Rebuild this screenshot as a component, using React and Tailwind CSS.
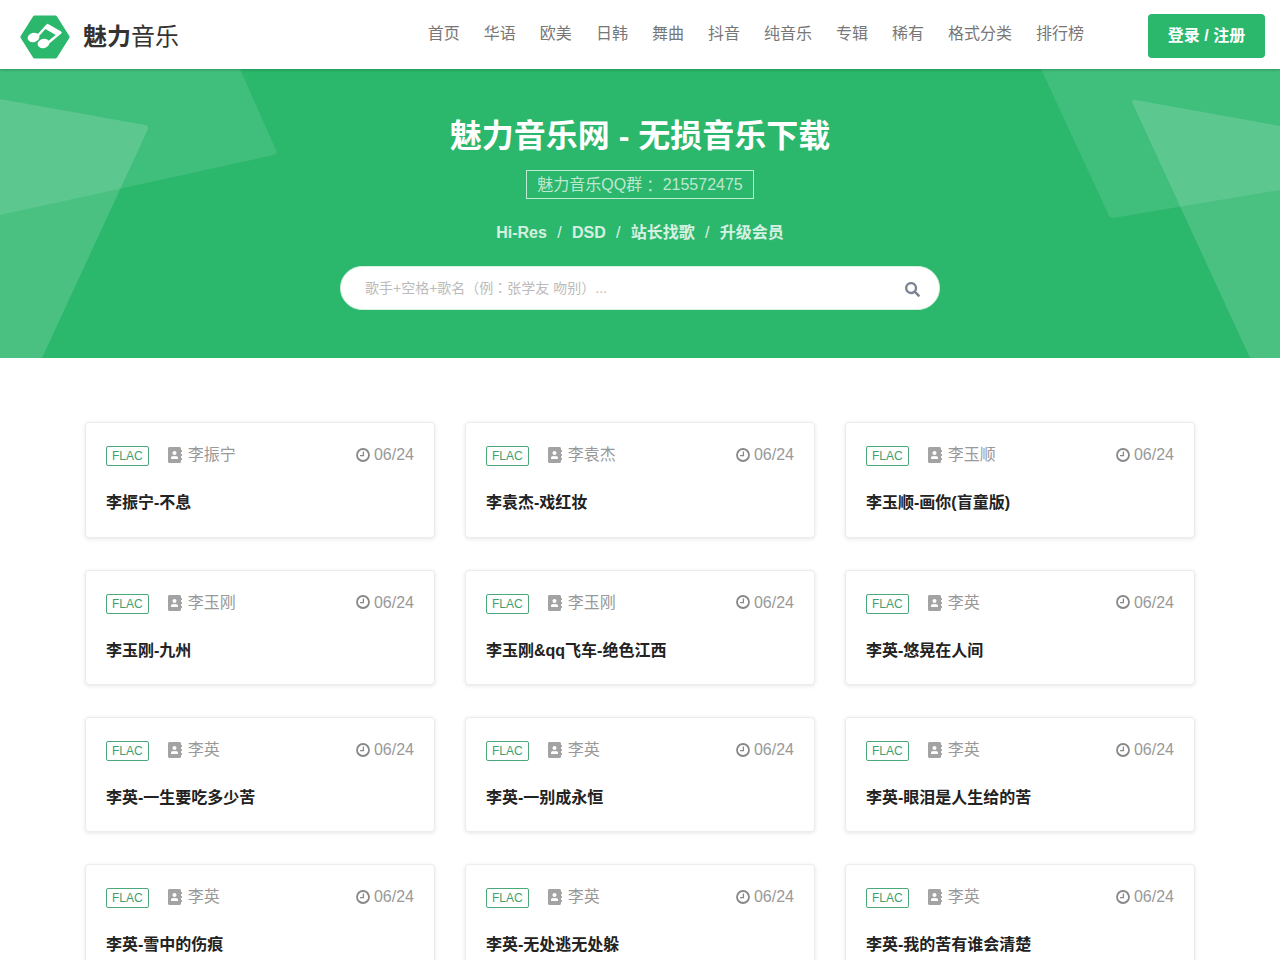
import React from 'react';
import { FaAddressBook, FaSearch } from 'react-icons/fa';

const navItems = ['首页', '华语', '欧美', '日韩', '舞曲', '抖音', '纯音乐', '专辑', '稀有', '格式分类', '排行榜'];

const songs = [
    { artist: '李振宁', title: '李振宁-不息' },
    { artist: '李袁杰', title: '李袁杰-戏红妆' },
    { artist: '李玉顺', title: '李玉顺-画你(盲童版)' },
    { artist: '李玉刚', title: '李玉刚-九州' },
    { artist: '李玉刚', title: '李玉刚&qq飞车-绝色江西' },
    { artist: '李英', title: '李英-悠晃在人间' },
    { artist: '李英', title: '李英-一生要吃多少苦' },
    { artist: '李英', title: '李英-一别成永恒' },
    { artist: '李英', title: '李英-眼泪是人生给的苦' },
    { artist: '李英', title: '李英-雪中的伤痕' },
    { artist: '李英', title: '李英-无处逃无处躲' },
    { artist: '李英', title: '李英-我的苦有谁会清楚' },
];

const Logo = () => (
    <svg width="50" height="44" viewBox="0 0 50 44" className="shrink-0 mt-[2px]">
        <path d="M13 1.5 a2 2 0 0 1 1.7 -1 H35.3 a2 2 0 0 1 1.7 1 L49.3 21 a2 2 0 0 1 0 2 L37 42.5 a2 2 0 0 1 -1.7 1 H14.7 a2 2 0 0 1 -1.7 -1 L0.7 23 a2 2 0 0 1 0 -2 Z" fill="#2bb76c" />
        <ellipse cx="13.5" cy="22.5" rx="6" ry="4.6" transform="rotate(-15 13.5 22.5)" fill="#fff" />
        <ellipse cx="23.5" cy="28.5" rx="6" ry="4.6" transform="rotate(-15 23.5 28.5)" fill="#fff" />
        <path d="M18 20.5 L27.5 10 L40.5 17.5 L28.5 27.5" fill="none" stroke="#fff" strokeWidth="2.4" strokeLinejoin="round" />
        <path d="M27.5 10 L40.5 17.5 L37.5 21 L24.5 13.5 Z" fill="#fff" />
    </svg>
);

// nen hero: may mang trong suot, ve bang svg
const HeroShapes = () => (
    <svg className="absolute inset-0 w-full h-full" viewBox="0 0 1280 289" preserveAspectRatio="none">
        <path d="M0 0 H240 L276 81 Q278 85 274 86 L0 146 Z" fill="#fff" fillOpacity="0.1" />
        <path d="M0 30 L145 56 Q149 57 148 60 L42 289 H0 Z" fill="#fff" fillOpacity="0.15" />
        <path d="M1041 0 H1280 V121 L1113 149 Q1110 149 1109 147 Z" fill="#fff" fillOpacity="0.1" />
        <path d="M1132 33 Q1132 30 1136 31 L1280 57 V289 H1250 Z" fill="#fff" fillOpacity="0.15" />
    </svg>
);

const ClockIcon = () => (
    <svg width="14" height="14" viewBox="0 0 14 14" className="mr-[4px] mb-[1px]">
        <circle cx="7" cy="7" r="6" fill="none" stroke="#888" strokeWidth="1.8" />
        <path d="M7.4 3.5 V7.6 H4" fill="none" stroke="#888" strokeWidth="1.3" />
    </svg>
);

const SongCard = ({ song }) => (
    <div className="h-[115.33px] px-5 pt-[20px] bg-white border border-[#ececec] rounded shadow-[0_1px_4px_rgba(0,0,0,0.1)]">
        <div className="flex items-center h-[24px] text-[16px] text-[#999]">
            <span className="h-[20px] px-[5px] mt-[2px] flex items-center border border-[#4aa87a] rounded-[2px] text-[12px] text-[#3f9f70]">FLAC</span>
            <FaAddressBook className="ml-[18px] mr-[5px] text-[16px] text-[#a3a3a3]" />
            <span>{song.artist}</span>
            <span className="ml-auto flex items-center">
                <ClockIcon />
                06/24
            </span>
        </div>
        <h3 className="mt-[24px] text-[16px] leading-[24px] font-bold text-[#222]">{song.title}</h3>
    </div>
);

const App = () => {
    return (
        <div className="h-screen overflow-hidden bg-white font-['Liberation_Sans','Noto_Sans_CJK_SC',sans-serif]">
            <header className="relative z-10 h-[69px] pt-[3px] pl-[20px] pr-[15px] flex items-center bg-white shadow-[0_1px_3px_rgba(0,0,0,0.2)]">
                <Logo />
                <div className="ml-[13px] mt-[2px] text-[24px] text-[#333]">
                    <span className="font-bold">魅力</span>音乐
                </div>
                <nav className="ml-auto mb-[4px] flex gap-[24px] text-[16px] text-[#777]">
                    {navItems.map(item => (
                        <a key={item} href="#">{item}</a>
                    ))}
                </nav>
                <button className="ml-[64px] w-[117px] h-[44px] bg-[#2bb76c] rounded text-white text-[16px] font-bold">
                    登录 / 注册
                </button>
            </header>

            <section className="relative h-[289px] bg-[#2bb76c] overflow-hidden">
                <HeroShapes />
                <div className="relative flex flex-col items-center pt-[49px]">
                    <h1 className="text-[32px] leading-[36px] font-bold text-white">魅力音乐网 - 无损音乐下载</h1>
                    <div className="mt-[16px] h-[29px] px-[10px] flex items-center whitespace-pre border border-white/70 text-[16px] text-white/70">
                        魅力音乐QQ群<span className="font-['Noto_Sans_CJK_TC']">：</span> 215572475
                    </div>
                    <div className="mt-[22px] flex gap-[10.3px] text-[16px] font-bold text-white/80">
                        <a href="#">Hi-Res</a>
                        <span className="font-normal">/</span>
                        <a href="#">DSD</a>
                        <span className="font-normal">/</span>
                        <a href="#">站长找歌</a>
                        <span className="font-normal">/</span>
                        <a href="#">升级会员</a>
                    </div>
                    <div className="mt-[21px] w-[600px] h-[44px] pl-[24px] pr-[19px] flex items-center justify-between bg-white border border-[#d5f0e0] rounded-full">
                        <span className="text-[14px] text-[#bbb]">
                            歌手+空格+歌名（例<span className="font-['Noto_Sans_CJK_TC']">：</span>张学友 吻别）...
                        </span>
                        <FaSearch className="mt-[3px] text-[15px] text-[#7c8595]" />
                    </div>
                </div>
            </section>

            <main className="w-[1110px] ml-[85px] pt-[64.4px] grid grid-cols-3 gap-x-[30px] gap-y-[32px]">
                {songs.map(song => (
                    <SongCard key={song.title} song={song} />
                ))}
            </main>
        </div>
    );
};

export default App;
